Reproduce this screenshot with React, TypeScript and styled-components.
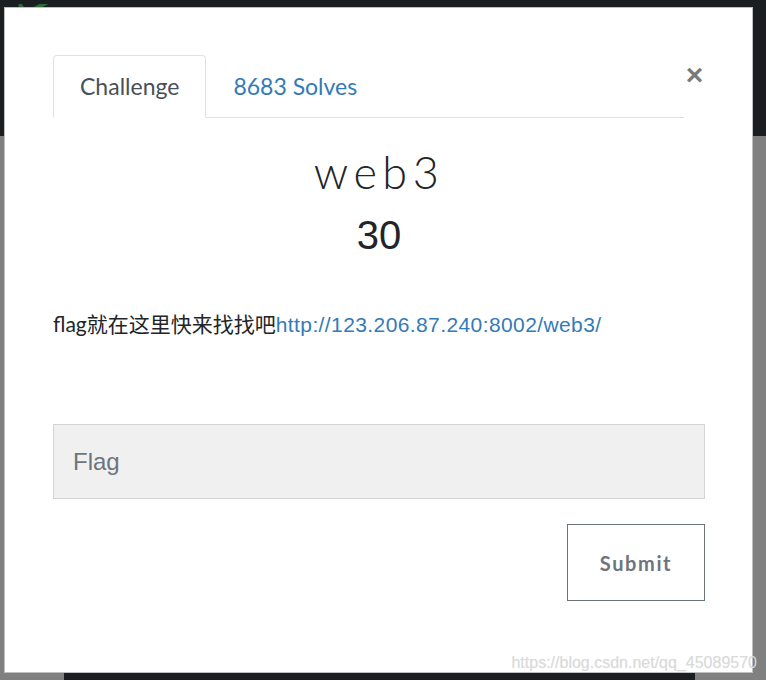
import React from "react";
import styled, { createGlobalStyle } from "styled-components";

const GlobalStyle = createGlobalStyle`
  html, body {
    margin: 0;
    padding: 0;
    background: #808080;
  }
  * { box-sizing: border-box; }
`;

const Page = styled.div`
  position: relative;
  width: 766px;
  height: 680px;
  overflow: hidden;
  display: flex;
  flex-direction: column;
  background: #808080;
`;

const Navbar = styled.div`
  height: 136px;
  background: #1b1e21;
  padding-left: 14px;
`;

const Backdrop = styled.div`
  flex: 1;
  display: flex;
  flex-direction: column;
`;

const DarkBlock = styled.div`
  margin: 537px 0 0 64px;
  width: 631px;
  flex: 1;
  background: #1b1e21;
`;

const Modal = styled.div`
  position: absolute;
  left: 4px;
  top: 7px;
  width: 749px;
  height: 666px;
  background: #fff;
  border: 1px solid rgba(0, 0, 0, 0.25);
  padding: 47px 47px 0 48px;
  display: flex;
  flex-direction: column;
`;

const Header = styled.div`
  display: flex;
  align-items: flex-start;
`;

const Tabs = styled.div`
  flex: 1;
  display: flex;
  border-bottom: 1px solid #dee2e6;
`;

const Tab = styled.div<{ $active?: boolean }>`
  padding: 17px 26px 17px;
  margin-bottom: -1px;
  font-family: "Lato", sans-serif;
  font-size: 23px;
  line-height: 27px;
  color: ${(p) => (p.$active ? "#495057" : "#337ab7")};
  border: 1px solid ${(p) => (p.$active ? "#dee2e6" : "transparent")};
  border-bottom-color: ${(p) => (p.$active ? "#fff" : "transparent")};
  border-radius: 4px 4px 0 0;
  background: ${(p) => (p.$active ? "#fff" : "transparent")};
`;

const Close = styled.div`
  width: 21px;
  height: 40px;
  line-height: 40px;
  text-align: center;
  font-family: "Liberation Sans", Arial, sans-serif;
  font-weight: 700;
  font-size: 30px;
  color: #7a7a7a;
`;

const Title = styled.h3`
  margin: 28px 0 0;
  text-align: center;
  font-family: "Lato", sans-serif;
  font-weight: 300;
  font-size: 45px;
  line-height: 53px;
  letter-spacing: 5.5px;
  color: #212529;
`;

const Value = styled.h4`
  margin: 12px 0 0;
  text-align: center;
  font-family: "Liberation Sans", Arial, sans-serif;
  font-weight: 400;
  font-size: 40px;
  line-height: 48px;
  color: #212529;
`;

const Description = styled.p`
  margin: 50px 0 0;
  font-family: "Lato", "Noto Sans CJK SC", sans-serif;
  font-size: 21px;
  line-height: 30px;
  color: #212529;
`;

const Link = styled.a`
  font-family: "Liberation Sans", Arial, sans-serif;
  color: #337ab7;
  text-decoration: none;
  letter-spacing: 0.4px;
`;

const FlagInput = styled.input`
  margin-top: 84px;
  width: 100%;
  height: 75px;
  padding: 0 19px;
  background: #f0f0f0;
  border: 1px solid #d4d4d4;
  border-radius: 0;
  font-family: "Liberation Sans", Arial, sans-serif;
  font-size: 24px;
  color: #495057;
  outline: none;
  &::placeholder {
    color: #6c757d;
  }
`;

const Actions = styled.div`
  display: flex;
  justify-content: flex-end;
  margin-top: 25px;
`;

const SubmitButton = styled.button`
  width: 138px;
  height: 77px;
  background: #fff;
  border: 1px solid #6c757d;
  border-radius: 0;
  font-family: "Lato", sans-serif;
  font-weight: 700;
  font-size: 20px;
  letter-spacing: 1.6px;
  color: #6c757d;
`;

const Watermark = styled.div`
  position: absolute;
  right: 9px;
  bottom: 8px;
  font-family: "Liberation Sans", Arial, sans-serif;
  font-size: 16px;
  color: #dadada;
  text-shadow: 0 0 1px rgba(0, 0, 0, 0.08);
`;

export default function App() {
  return (
    <>
      <GlobalStyle />
      <Page>
        <Navbar>
          <svg width="50" height="10" viewBox="0 0 50 10">
            <path d="M6 0 Q8 8 18 6 L34 -2" stroke="#2d6a3a" strokeWidth="4" fill="none" />
          </svg>
        </Navbar>
        <Backdrop>
          <DarkBlock />
        </Backdrop>
        <Modal>
          <Header>
            <Tabs>
              <Tab $active>Challenge</Tab>
              <Tab>8683 Solves</Tab>
            </Tabs>
            <Close>×</Close>
          </Header>
          <Title>web3</Title>
          <Value>30</Value>
          <Description>
            flag就在这里快来找找吧
            <Link href="#">http://123.206.87.240:8002/web3/</Link>
          </Description>
          <FlagInput placeholder="Flag" />
          <Actions>
            <SubmitButton>Submit</SubmitButton>
          </Actions>
        </Modal>
        <Watermark>https://blog.csdn.net/qq_45089570</Watermark>
      </Page>
    </>
  );
}
